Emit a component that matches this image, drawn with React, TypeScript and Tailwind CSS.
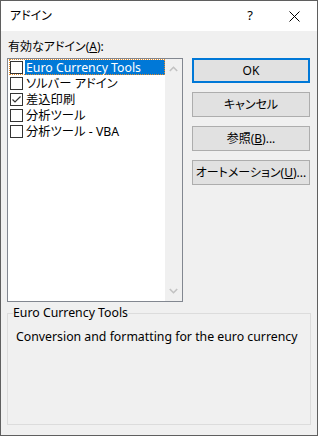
import React from "react";

const font = { fontFamily: '"Noto Sans", "Noto Sans CJK JP", sans-serif' };

const items = [
  { label: "Euro Currency Tools", checked: false },
  { label: "ソルバー アドイン", checked: false },
  { label: "差込印刷", checked: true },
  { label: "分析ツール", checked: false },
  { label: "分析ツール - VBA", checked: false },
];

const CheckBox = ({ checked }: { checked: boolean }) => (
  <div className="w-[13px] h-[13px] border border-[#333333] bg-white flex items-center justify-center shrink-0">
    {checked && (
      <svg width="11" height="11" viewBox="0 0 11 11">
        <path d="M1.5 5.5 L4 8 L9.5 2.5" fill="none" stroke="#333333" strokeWidth="1.2" />
      </svg>
    )}
  </div>
);

const Button = ({ children, primary }: { children: React.ReactNode; primary?: boolean }) => (
  <button
    className={
      "w-[118px] h-[25px] bg-[#e1e1e1] text-[12px] text-black flex items-center justify-center " +
      (primary ? "border-2 border-[#0078d7]" : "border border-[#adadad]")
    }
  >
    <span className="whitespace-nowrap">{children}</span>
  </button>
);

export default function App() {
  return (
    <div
      className="w-[318px] h-[436px] border border-[#5f5f5f] bg-[#f0f0f0] flex flex-col text-black text-[12px] [font-feature-settings:'palt']"
      style={font}
    >
      {/* title bar */}
      <div className="h-[30px] bg-white flex items-center pl-[9px]">
        <span className="text-[12px]">アドイン</span>
        <span className="ml-auto mr-[36px] text-[13px]">?</span>
        <svg width="11" height="11" viewBox="0 0 11 11" className="mr-[17px]">
          <path d="M0.5 0.5 L10.5 10.5 M10.5 0.5 L0.5 10.5" stroke="#000" strokeWidth="1" />
        </svg>
      </div>

      <div className="flex-1 flex flex-col px-[6px] pt-[8px] pb-[10px]">
        <div className="flex">
          <div className="w-[176px] flex flex-col">
            <div className="h-[16px] leading-[16px] pl-[1px]">
              有効なアドイン(<span className="underline">A</span>):
            </div>
            <div className="mt-[3px] h-[244px] border border-[#828790] bg-white flex">
              <div className="flex-1 flex flex-col pl-[1px]">
                {items.map((it, i) => (
                  <div
                    key={it.label}
                    className={
                      "h-[16px] flex items-center pl-[1px] " +
                      (i === 0 ? "outline-1 outline-dotted outline-[#e08a2a] -outline-offset-1" : "")
                    }
                  >
                    <CheckBox checked={it.checked} />
                    <span
                      className={
                        "ml-[2px] h-[15px] leading-[15px] flex-1 pl-[1px] whitespace-nowrap text-[12.3px] " +
                        (i === 0 ? "bg-[#0078d7] text-white" : "")
                      }
                    >
                      {it.label}
                    </span>
                  </div>
                ))}
              </div>
              <div className="w-[17px] bg-[#f0f0f0] flex flex-col items-center justify-between py-[7px]">
                <svg width="9" height="6" viewBox="0 0 9 6">
                  <path d="M0.8 5 L4.5 1.3 L8.2 5" fill="none" stroke="#c2c2c2" strokeWidth="1.6" />
                </svg>
                <svg width="9" height="6" viewBox="0 0 9 6">
                  <path d="M0.8 1 L4.5 4.7 L8.2 1" fill="none" stroke="#c2c2c2" strokeWidth="1.6" />
                </svg>
              </div>
            </div>
          </div>

          <div className="ml-[9px] pt-[19px] flex flex-col gap-[9px]">
            <Button primary>OK</Button>
            <Button>キャンセル</Button>
            <Button>
              参照(<span className="underline">B</span>)...
            </Button>
            <Button>
              オートメーション(<span className="underline">U</span>)...
            </Button>
          </div>
        </div>

        <fieldset className="mt-[4px] flex-1 w-[304px] border border-[#dcdcdc] p-0">
          <legend className="ml-[5px] px-0 text-[12.3px] leading-[14px]">Euro Currency Tools</legend>
          <div className="mt-[9px] ml-[8px] leading-[16px] text-[12.3px]">
            Conversion and formatting for the euro currency
          </div>
        </fieldset>
      </div>
    </div>
  );
}
